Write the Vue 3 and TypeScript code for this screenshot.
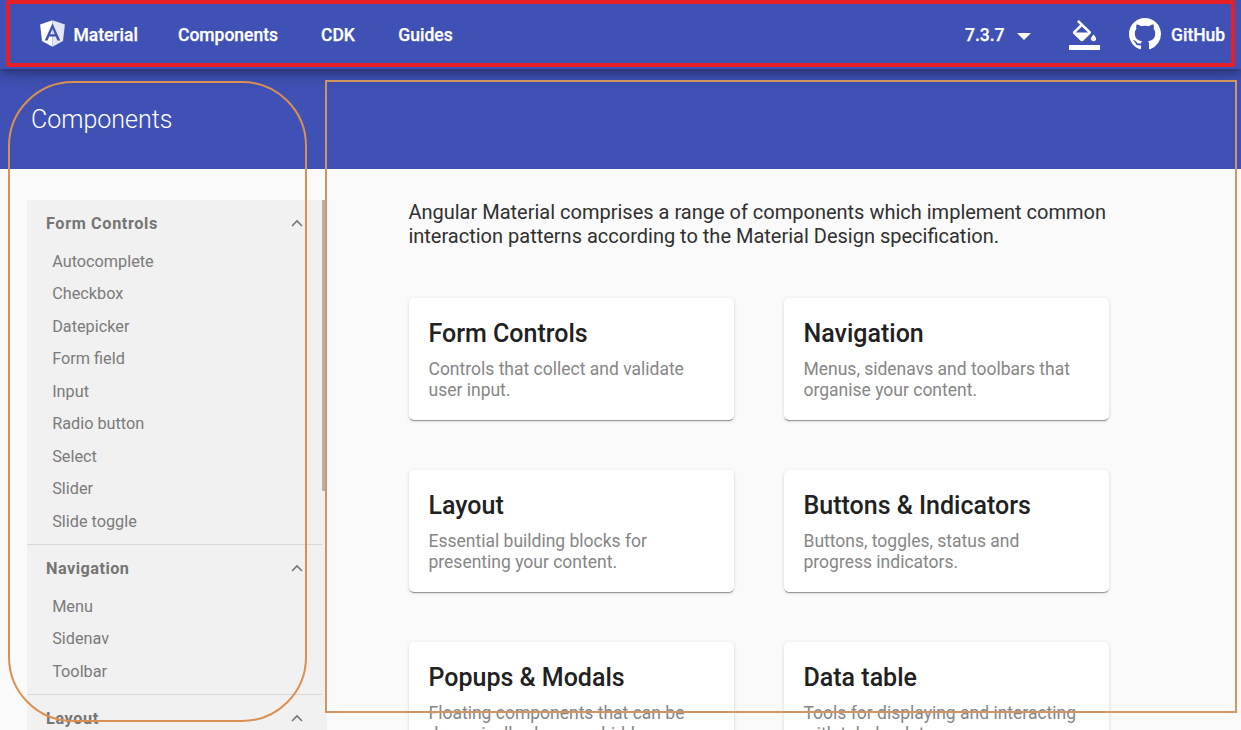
<script setup lang="ts">
interface Section {
  title: string
  items: string[]
}
interface Card {
  title: string
  lines: string[]
}

const links: { label: string; cls: string }[] = [
  { label: 'Components', cls: 'link-components' },
  { label: 'CDK', cls: 'link-cdk' },
  { label: 'Guides', cls: 'link-guides' },
]

const sections: Section[] = [
  {
    title: 'Form Controls',
    items: ['Autocomplete', 'Checkbox', 'Datepicker', 'Form field', 'Input', 'Radio button', 'Select', 'Slider', 'Slide toggle'],
  },
  { title: 'Navigation', items: ['Menu', 'Sidenav', 'Toolbar'] },
  { title: 'Layout', items: [] },
]

const cards: Card[] = [
  { title: 'Form Controls', lines: ['Controls that collect and validate', 'user input.'] },
  { title: 'Navigation', lines: ['Menus, sidenavs and toolbars that', 'organise your content.'] },
  { title: 'Layout', lines: ['Essential building blocks for', 'presenting your content.'] },
  { title: 'Buttons & Indicators', lines: ['Buttons, toggles, status and', 'progress indicators.'] },
  { title: 'Popups & Modals', lines: ['Floating components that can be', 'dynamically shown or hidden.'] },
  { title: 'Data table', lines: ['Tools for displaying and interacting', 'with tabular data.'] },
]
</script>

<template>
  <div class="page">
    <header class="navbar">
      <a class="brand">
        <svg class="logo" viewBox="31 30 188 200">
          <path fill="#fff" d="M125 30 31.9 63.2 46.1 186.3 125 230z" />
          <path fill="#e4e6f5" d="M125 30v200l78.9-43.7 14.2-123.1z" />
          <path fill="#3f51b5" d="M125 52.1 66.8 182.6h21.7l11.7-29.2h49.4l11.7 29.2H183zm17 83.3h-34l17-40.9z" />
        </svg>
        <span>Material</span>
      </a>
      <nav class="links">
        <a v-for="l in links" :key="l.label" :class="l.cls">{{ l.label }}</a>
      </nav>
      <div class="version">
        <span>7.3.7</span>
        <svg class="caret" viewBox="0 0 14 7"><path fill="#fff" d="M0 0h14L7 7z" /></svg>
      </div>
      <svg class="fill-icon" viewBox="0 0 24 24" preserveAspectRatio="none">
        <path
          fill="#fff"
          d="M16.56 8.94 7.62 0 6.21 1.41l2.38 2.38-5.15 5.15c-.59.59-.59 1.54 0 2.12l5.5 5.5c.29.29.68.44 1.06.44s.77-.15 1.06-.44l5.5-5.5c.59-.58.59-1.53 0-2.12zM5.21 10 10 5.21 14.79 10H5.21zM19 11.5s-2 2.17-2 3.5c0 1.1.9 2 2 2s2-.9 2-2c0-1.33-2-3.5-2-3.5zM0 20h24v4H0z"
        />
      </svg>
      <a class="github">
        <svg viewBox="0 0 16 16">
          <path
            fill="#fff"
            d="M8 0C3.58 0 0 3.58 0 8c0 3.54 2.29 6.53 5.47 7.59.4.07.55-.17.55-.38 0-.19-.01-.82-.01-1.49-2.01.37-2.53-.49-2.69-.94-.09-.23-.48-.94-.82-1.13-.28-.15-.68-.52-.01-.53.63-.01 1.08.58 1.23.82.72 1.21 1.87.87 2.33.66.07-.52.28-.87.51-1.07-1.78-.2-3.64-.89-3.64-3.95 0-.87.31-1.59.82-2.15-.08-.2-.36-1.02.08-2.12 0 0 .67-.21 2.2.82.64-.18 1.32-.27 2-.27s1.36.09 2 .27c1.53-1.04 2.2-.82 2.2-.82.44 1.1.16 1.92.08 2.12.51.56.82 1.27.82 2.15 0 3.07-1.87 3.75-3.65 3.95.29.25.54.73.54 1.48 0 1.07-.01 1.93-.01 2.2 0 .21.15.46.55.38A8.01 8.01 0 0 0 16 8c0-4.42-3.58-8-8-8z"
          />
        </svg>
        <span>GitHub</span>
      </a>
    </header>

    <div class="title-band"><h1>Components</h1></div>

    <div class="body">
      <aside class="sidebar">
        <div class="sections">
          <section v-for="s in sections" :key="s.title" class="section">
            <div class="section-head">
              <span>{{ s.title }}</span>
              <svg viewBox="0 0 12 8"><path d="M1 7l5-5 5 5" fill="none" stroke="#757575" stroke-width="1.6" /></svg>
            </div>
            <ul v-if="s.items.length">
              <li v-for="i in s.items" :key="i">{{ i }}</li>
            </ul>
          </section>
        </div>
        <div class="scrollbar"><div class="thumb"></div></div>
      </aside>

      <main class="content">
        <p class="intro">
          <span>Angular Material comprises a range of components which implement common</span>
          <span>interaction patterns according to the Material Design specification.</span>
        </p>
        <div class="cards">
          <article v-for="c in cards" :key="c.title" class="card">
            <h2>{{ c.title }}</h2>
            <p><span v-for="t in c.lines" :key="t">{{ t }}</span></p>
          </article>
        </div>
      </main>
    </div>

    <div class="outline outline-nav"></div>
    <div class="outline outline-side"></div>
    <div class="outline outline-content"></div>
  </div>
</template>

<style>
body {
  margin: 0;
  overflow: hidden;
}
</style>

<style scoped>
.page {
  position: relative;
  width: 1241px;
  height: 730px;
  overflow: hidden;
  display: flex;
  flex-direction: column;
  background: #fafafa;
  font-family: Roboto, sans-serif;
}
h1, h2, p, ul {
  margin: 0;
  padding: 0;
}
.navbar {
  position: relative;
  z-index: 1;
  flex: none;
  box-sizing: border-box;
  height: 69px;
  padding-left: 40px;
  display: flex;
  align-items: center;
  background: #3f51b5;
  color: #fff;
  font-size: 17.5px;
  font-weight: 500;
  line-height: 24px;
  white-space: nowrap;
  -webkit-text-stroke: .25px #fff;
  box-shadow: 0 4px 6px -1px rgba(0, 0, 0, .2), 0 7px 12px rgba(0, 0, 0, .14), 0 1px 22px rgba(0, 0, 0, .12);
}
.brand {
  display: flex;
  align-items: center;
  width: 138px;
}
.logo {
  width: 25px;
  height: 27px;
  margin: 0 8.4px 2px 0;
}
.links {
  display: flex;
}
.link-components {
  width: 143px;
}
.link-cdk {
  width: 77.3px;
}
.version {
  display: flex;
  align-items: center;
  margin-left: auto;
  width: 103.5px;
}
.caret {
  width: 14px;
  height: 7px;
  margin: 4px 0 0 12px;
}
.fill-icon {
  width: 31px;
  height: 30px;
  margin-right: 29.5px;
}
.github {
  display: flex;
  align-items: center;
  width: 112px;
}
.github svg {
  width: 32px;
  height: 32px;
  margin: 0 10px 2px 0;
}
.title-band {
  flex: none;
  box-sizing: border-box;
  height: 100px;
  padding: 2px 0 0 31px;
  background: #3f51b5;
  display: flex;
  align-items: center;
}
h1 {
  color: #fff;
  font-size: 25px;
  font-weight: 300;
  line-height: 30px;
}
.body {
  flex: 1;
  min-height: 0;
  display: flex;
  padding: 31px 0 0 27px;
}
.sidebar {
  width: 300px;
  flex: none;
  display: flex;
  background: #f1f1f1;
  color: #7b7b7b;
}
.sections {
  flex: 1;
}
.section {
  border-bottom: 1px solid #d8d8d8;
}
.section-head {
  display: flex;
  align-items: center;
  justify-content: space-between;
  height: 46px;
  padding: 0 19px;
  font-size: 16.25px;
  font-weight: 700;
  letter-spacing: .62px;
  color: #757575;
}
.section:nth-child(2) .section-head {
  letter-spacing: .48px;
}
.section-head svg {
  width: 12px;
  height: 8px;
}
ul {
  list-style: none;
  padding-bottom: 6px;
}
li {
  height: 32px;
  line-height: 31px;
  padding-left: 25.2px;
  font-size: 16.25px;
}
li:nth-child(even) {
  height: 33px;
}
.scrollbar {
  width: 5px;
}
.thumb {
  height: 291px;
  background: #b0b0b0;
}
.content {
  margin-left: 82px;
  width: 701px;
}
.intro {
  margin-left: -.6px;
  font-size: 20px;
  line-height: 24px;
  color: #303030;
  white-space: nowrap;
}
.intro span,
.card span {
  display: block;
}
.cards {
  display: grid;
  grid-template-columns: 325px 325px;
  grid-auto-rows: 122px;
  gap: 50px;
  margin-top: 50px;
}
.card {
  box-sizing: border-box;
  padding: 21px 19.5px;
  background: #fff;
  border-radius: 5px;
  box-shadow: 0 2px 1px -1px rgba(0, 0, 0, .26), 0 1px 1px rgba(0, 0, 0, .16), 0 1px 4px rgba(0, 0, 0, .12);
  white-space: nowrap;
}
h2 {
  font-size: 25px;
  font-weight: 500;
  line-height: 30px;
  color: #212121;
}
.card p {
  margin-top: 10px;
  font-size: 17.5px;
  line-height: 21px;
  color: #868686;
}
.outline {
  position: absolute;
  z-index: 2;
  box-sizing: border-box;
  pointer-events: none;
}
.outline-nav {
  left: 6px;
  top: 0;
  width: 1229px;
  height: 67px;
  border: 4px solid #e71f27;
  border-radius: 2px;
}
.outline-side {
  left: 8px;
  top: 81px;
  width: 299px;
  height: 641px;
  border: 2px solid #db8f50;
  border-radius: 65px;
}
.outline-content {
  left: 325px;
  top: 80px;
  width: 912px;
  height: 633px;
  border: 2px solid #d19564;
}
</style>
